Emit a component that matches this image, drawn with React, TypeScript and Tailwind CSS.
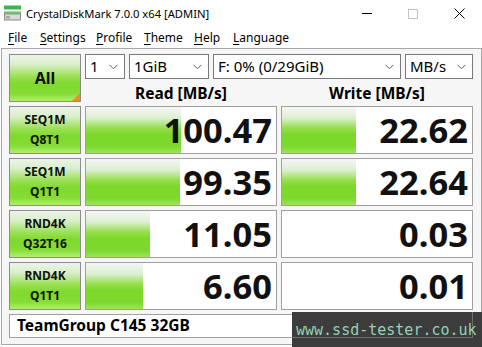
import React from "react";

const rows = [
  { l1: "SEQ1M", l2: "Q8T1", r: "100.47", rw: 95, w: "22.62", ww: 74 },
  { l1: "SEQ1M", l2: "Q1T1", r: "99.35", rw: 94, w: "22.64", ww: 74 },
  { l1: "RND4K", l2: "Q32T16", r: "11.05", rw: 64, w: "0.03", ww: 0 },
  { l1: "RND4K", l2: "Q1T1", r: "6.60", rw: 57, w: "0.01", ww: 0 },
];

const btnBg =
  "bg-[linear-gradient(to_bottom,#eef3ea_0%,#d6eec6_22%,#9ce158_46%,#80d92e_62%,#84dc34_84%,#b0ee76_100%)]";
const barBg =
  "bg-[linear-gradient(to_bottom,#f6f6f6_0%,#dcefd0_24%,#96de4c_46%,#7cd82a_60%,#7cd82a_84%,#9ae45c_100%)]";

function Chevron() {
  return (
    <svg width="9" height="6" viewBox="0 0 9 6" className="shrink-0">
      <polyline points="0.5,0.8 4.5,4.8 8.5,0.8" fill="none" stroke="#606060" strokeWidth="1" />
    </svg>
  );
}

function Combo({ text, w }: { text: string; w: string }) {
  return (
    <div className={`${w} h-[25px] bg-white border border-[#7a7a7a] flex items-center justify-between pl-[4px] pr-[6px] text-[15px] leading-none text-black`}>
      <span>{text}</span>
      <Chevron />
    </div>
  );
}

function Cell({ value, bar }: { value: string; bar: number }) {
  return (
    <div
      className={`h-[48px] bg-white border border-[#a0a0a0] flex items-center justify-end pr-[4px] ${barBg} bg-no-repeat`}
      style={{ backgroundSize: `${bar}px 100%` }}
    >
      <span className="text-[34.5px] font-bold leading-none text-[#111]">{value}</span>
    </div>
  );
}

export default function App() {
  return (
    <div className="w-[482px] h-[347px] bg-white relative overflow-hidden font-['Noto_Sans',sans-serif] text-black">
      {/* Title bar */}
      <div className="h-[27px] flex items-center">
        <svg width="18" height="17" viewBox="0 0 18 17" className="ml-[4px]">
          <rect x="0" y="0.5" width="17" height="4" fill="#38b848" />
          <rect x="0" y="6.5" width="17" height="9" fill="#8a8a8a" />
          <rect x="1" y="7.5" width="15" height="7" fill="#d9d9d9" />
          <rect x="1" y="7.5" width="15" height="2" fill="#5cc05a" />
          <rect x="2" y="11" width="4" height="2.5" fill="#a8a8a8" />
        </svg>
        <span className="ml-[4px] text-[11.2px] leading-none">CrystalDiskMark 7.0.0 x64 [ADMIN]</span>
        <div className="ml-auto flex items-center h-full">
          <div className="w-[46px] h-full flex items-center justify-center">
            <div className="w-[10px] h-[1px] bg-black" />
          </div>
          <div className="w-[46px] h-full flex items-center justify-center">
            <div className="w-[10px] h-[10px] border border-[#c4c4c4]" />
          </div>
          <div className="w-[46px] h-full flex items-center justify-center">
            <svg width="11" height="11" viewBox="0 0 11 11">
              <path d="M0.5 0.5 L10.5 10.5 M10.5 0.5 L0.5 10.5" stroke="#000" strokeWidth="1" />
            </svg>
          </div>
        </div>
      </div>

      {/* Menu bar */}
      <div className="h-[21px] flex items-center pl-[8px] text-[12px] leading-none">
        <span className="w-[32px]"><span className="underline underline-offset-2">F</span>ile</span>
        <span className="w-[56px]"><span className="underline underline-offset-2">S</span>ettings</span>
        <span className="w-[48px]"><span className="underline underline-offset-2">P</span>rofile</span>
        <span className="w-[50px]"><span className="underline underline-offset-2">T</span>heme</span>
        <span className="w-[39px]"><span className="underline underline-offset-2">H</span>elp</span>
        <span><span className="underline underline-offset-2">L</span>anguage</span>
      </div>

      {/* Client area */}
      <div className="ml-[1px] w-[481px] h-[297px] border border-[#a8a8a8] bg-[#f6f6f6] pl-[7px] pt-[5px]">
        <div className="grid grid-cols-[72px_192px_192px] gap-[4px]">
          <div className={`h-[48px] border border-[#8c8c8c] ${btnBg} flex items-center justify-center relative`}>
            <span className="text-[16px] font-bold leading-none text-[#111]">All</span>
            <svg width="8" height="8" viewBox="0 0 8 8" className="absolute right-0 bottom-0">
              <polygon points="8,0 8,8 0,8" fill="#ef8a26" />
            </svg>
          </div>
          <div className="col-span-2 flex flex-col">
            <div className="flex gap-[4px]">
              <Combo text="1" w="w-[40px]" />
              <Combo text="1GiB" w="w-[80px]" />
              <Combo text="F: 0% (0/29GiB)" w="w-[188px]" />
              <Combo text="MB/s" w="w-[68px]" />
            </div>
            <div className="grid grid-cols-[192px_192px] gap-[4px] flex-1 items-center pt-[7px]">
              <div className="text-center text-[15.5px] font-bold leading-none">Read [MB/s]</div>
              <div className="text-center text-[15.5px] font-bold leading-none">Write [MB/s]</div>
            </div>
          </div>

          {rows.map((r, i) => (
            <React.Fragment key={i}>
              <div className={`h-[48px] border border-[#8c8c8c] ${btnBg} flex flex-col items-center justify-center text-[12px] font-bold leading-[20px] text-[#111]`}>
                <span>{r.l1}</span>
                <span>{r.l2}</span>
              </div>
              <Cell value={r.r} bar={r.rw} />
              <Cell value={r.w} bar={r.ww} />
            </React.Fragment>
          ))}

          <div className="col-span-3 h-[24px] bg-white border border-[#a0a0a0] flex items-center pl-[7px]">
            <span className="text-[15.5px] font-bold leading-none">TeamGroup C145 32GB</span>
          </div>
        </div>
      </div>

      {/* Watermark overlay */}
      <div className="absolute left-[292px] top-[312px] right-0 bottom-0 bg-[#3c3c3c] flex items-center pl-[4px]">
        <div className="absolute left-0 top-[25px] w-[181px] h-[1px] bg-[#6e6e6e]" />
        <div className="absolute left-[180px] top-0 w-[1px] h-[26px] bg-[#6e6e6e]" />
        <span className="relative font-['DejaVu_Sans_Mono',monospace] text-[15px] leading-none text-[#93d2b6] mt-[2px]">www.ssd-tester.co.uk</span>
      </div>
    </div>
  );
}
